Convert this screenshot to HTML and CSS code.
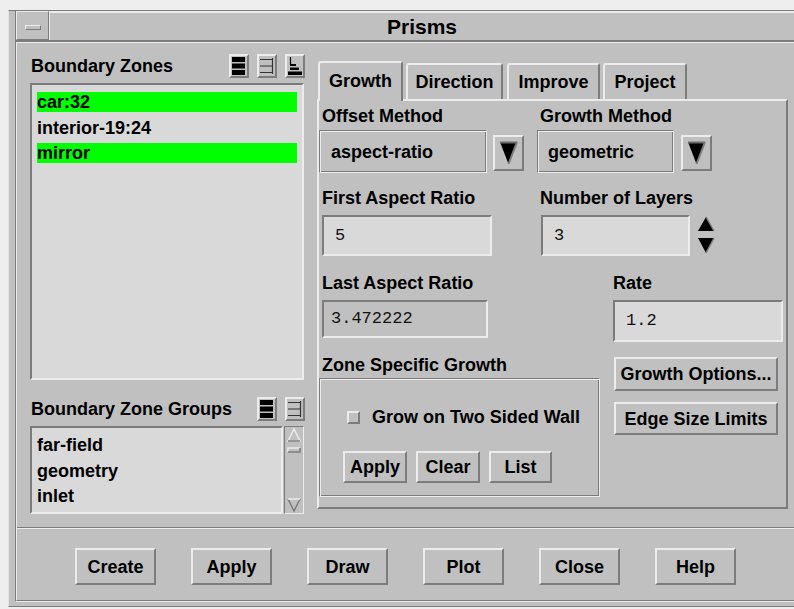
FILE: index.html
```html
<!DOCTYPE html>
<html>
<head>
<meta charset="utf-8">
<title>Prisms</title>
<link rel="stylesheet" href="styles.css">
</head>
<body>
<div class="wm">
  <div class="wm-inner">
    <div class="titlebar">
      <div class="wm-menu"><span class="wm-menu-bar"></span></div>
      <div class="wm-title">Prisms</div>
    </div>

    <div class="dialog">
      <div class="main">
        <!-- zone lists -->
        <div class="left">
          <div class="head">
            <span class="lbl-plain">Boundary Zones</span>
            <div class="icons">
              <span class="icon-btn">
                <svg width="16" height="20" viewBox="0 0 16 20"><rect x="1" y="1" width="13" height="5" fill="#000"/><rect x="1" y="7.5" width="13" height="5" fill="#000"/><rect x="1" y="14" width="13" height="5" fill="#000"/></svg>
              </span>
              <span class="icon-btn">
                <svg width="16" height="20" viewBox="0 0 16 20"><path d="M1 3.5H13M1 10H13M1 16.5H13M13.5 2V18" stroke="#333" stroke-width="1.2" fill="none"/></svg>
              </span>
              <span class="icon-btn">
                <svg width="16" height="20" viewBox="0 0 16 20"><path d="M3.5 1V9" stroke="#000" stroke-width="1.2"/><rect x="3" y="8" width="6" height="2" fill="#000"/><rect x="3" y="11.5" width="9" height="2.5" fill="#000"/><rect x="1" y="15.5" width="14" height="3.5" fill="#000"/></svg>
              </span>
            </div>
          </div>
          <div class="list zones">
            <div class="item sel">car:32</div>
            <div class="item">interior-19:24</div>
            <div class="item sel">mirror</div>
          </div>

          <div class="head groups-head">
            <span class="lbl-plain">Boundary Zone Groups</span>
            <div class="icons">
              <span class="icon-btn">
                <svg width="16" height="20" viewBox="0 0 16 20"><rect x="1" y="1" width="13" height="5" fill="#000"/><rect x="1" y="7.5" width="13" height="5" fill="#000"/><rect x="1" y="14" width="13" height="5" fill="#000"/></svg>
              </span>
              <span class="icon-btn">
                <svg width="16" height="20" viewBox="0 0 16 20"><path d="M1 3.5H13M1 10H13M1 16.5H13M13.5 2V18" stroke="#333" stroke-width="1.2" fill="none"/></svg>
              </span>
            </div>
          </div>
          <div class="scrolled">
            <div class="list groups">
              <div class="item">far-field</div>
              <div class="item">geometry</div>
              <div class="item">inlet</div>
            </div>
            <div class="vscroll">
              <svg width="18" height="86" viewBox="0 0 18 86">
                <path d="M3 14L9 2L15 14Z" fill="none" stroke="#ececec" stroke-width="1.5"/>
                <path d="M3 14H15" stroke="#7c7c7c" stroke-width="1.5"/>
                <path d="M3 25V21H15" fill="none" stroke="#ececec" stroke-width="1.5"/>
                <path d="M3 25H15V21" fill="none" stroke="#7c7c7c" stroke-width="1.5"/>
                <path d="M3 72L9 84L15 72" fill="none" stroke="#7c7c7c" stroke-width="1.5"/>
                <path d="M3 72H15" stroke="#ececec" stroke-width="1.5"/>
              </svg>
            </div>
          </div>
        </div>

        <!-- notebook -->
        <div class="right">
          <div class="tabs">
            <div class="tab active t-growth">Growth</div>
            <div class="tab t-direction">Direction</div>
            <div class="tab t-improve">Improve</div>
            <div class="tab t-project">Project</div>
          </div>
          <div class="panel">
            <div class="row row1">
              <div class="col-a">
                <div class="lbl">Offset Method</div>
                <div class="ctrl">
                  <div class="option opt-offset">aspect-ratio</div>
                  <div class="arrow-btn">
                    <svg width="27" height="32" viewBox="0 0 27 32"><path d="M5 5H22L13.5 27Z" fill="#000"/><path d="M5 5.5H22" stroke="#6a6a6a" stroke-width="2"/><path d="M22 5L13.5 27" stroke="#7c7c7c" stroke-width="2"/></svg>
                  </div>
                </div>
              </div>
              <div class="col-b">
                <div class="lbl">Growth Method</div>
                <div class="ctrl">
                  <div class="option opt-growth">geometric</div>
                  <div class="arrow-btn arrow-b">
                    <svg width="27" height="32" viewBox="0 0 27 32"><path d="M5 5H22L13.5 27Z" fill="#000"/><path d="M5 5.5H22" stroke="#6a6a6a" stroke-width="2"/><path d="M22 5L13.5 27" stroke="#7c7c7c" stroke-width="2"/></svg>
                  </div>
                </div>
              </div>
            </div>

            <div class="row row2">
              <div class="col-a">
                <div class="lbl">First Aspect Ratio</div>
                <div class="field f-first">5</div>
              </div>
              <div class="col-b">
                <div class="lbl">Number of Layers</div>
                <div class="ctrl ctrl-layers">
                  <div class="field f-layers">3</div>
                  <div class="spinner">
                    <svg width="21" height="38" viewBox="0 0 21 38"><path d="M2 15H18L10 1Z" fill="#000"/><path d="M10 1L18 15" stroke="#7c7c7c" stroke-width="1.5"/><path d="M2 22H18L10 37Z" fill="#000"/><path d="M18 22L10 37" stroke="#7c7c7c" stroke-width="1.5"/></svg>
                  </div>
                </div>
              </div>
            </div>

            <div class="row row3">
              <div class="col-c">
                <div class="lbl">Last Aspect Ratio</div>
                <div class="field ro f-last">3.472222</div>
                <div class="lbl lbl-zone">Zone Specific Growth</div>
                <div class="frame">
                  <div class="check-row">
                    <span class="checkbox"></span>
                    <span class="check-label">Grow on Two Sided Wall</span>
                  </div>
                  <div class="frame-btns">
                    <div class="btn b-apply">Apply</div>
                    <div class="btn b-clear">Clear</div>
                    <div class="btn b-list">List</div>
                  </div>
                </div>
              </div>
              <div class="col-d">
                <div class="lbl lbl-rate">Rate</div>
                <div class="field f-rate">1.2</div>
                <div class="btn b-wide b-options">Growth Options...</div>
                <div class="btn b-wide b-edge">Edge Size Limits</div>
              </div>
            </div>
          </div>
        </div>
      </div>

      <div class="separator"></div>

      <div class="actions">
        <div class="btn b-action">Create</div>
        <div class="btn b-action">Apply</div>
        <div class="btn b-action">Draw</div>
        <div class="btn b-action">Plot</div>
        <div class="btn b-action">Close</div>
        <div class="btn b-action">Help</div>
      </div>
    </div>
  </div>
</div>
</body>
</html>
```

FILE: styles.css
```css
* { box-sizing: border-box; }

html, body {
  margin: 0;
  height: 100%;
  overflow: hidden;
}

body {
  background: #eeeeee;
  font-family: "Liberation Sans", Arial, sans-serif;
  font-weight: bold;
  font-size: 18px;
  line-height: 20px;
  color: #000;
}

/* window manager frame */
.wm {
  margin: 10px 0 0 8px;
  width: 786px;
  height: 597px;
  background: #c0c0c0;
  border-top: 1px solid #7c7c7c;
  border-left: 1px solid #e4e4e4;
  border-bottom: 1px solid #7c7c7c;
  padding-left: 6px;
}

.wm-inner {
  height: 591px;
  border-left: 1px solid #7c7c7c;
  border-bottom: 1px solid #ececec;
  display: flex;
  flex-direction: column;
}

.titlebar {
  display: flex;
  height: 31px;
  border-bottom: 2px solid #7c7c7c;
}

.wm-menu {
  width: 33px;
  border: 1px solid;
  border-color: #ececec #7c7c7c #7c7c7c #ececec;
  display: flex;
  align-items: center;
  justify-content: center;
}

.wm-menu-bar {
  width: 16px;
  height: 5px;
  margin-top: 3px;
  border: 1px solid;
  border-color: #ececec #7c7c7c #7c7c7c #ececec;
}

.wm-title {
  flex: 1;
  border-top: 2px solid #ececec;
  border-left: 1px solid #ececec;
  font-size: 21px;
  display: flex;
  align-items: center;
  justify-content: center;
}

/* dialog body */
.dialog {
  height: 559px;
  border-top: 1px solid #ececec;
  border-left: 1px solid #ececec;
  border-bottom: 1px solid #7c7c7c;
}

.main {
  display: flex;
  padding: 10px 0 0 13px;
}

.left {
  width: 274px;
  display: flex;
  flex-direction: column;
}

.head {
  display: flex;
  align-items: center;
  justify-content: space-between;
  height: 26px;
}

.groups-head {
  margin-top: 17px;
  height: 24px;
}

.lbl-plain { padding-left: 1px; }

.icons {
  display: flex;
  gap: 8px;
  margin-right: -1px;
}

.icon-btn {
  display: flex;
  align-items: center;
  justify-content: center;
  width: 20px;
  height: 24px;
  border: 2px solid;
  border-color: #ececec #7c7c7c #7c7c7c #ececec;
}

.list {
  background: #d9d9d9;
  border: 2px solid;
  border-color: #7c7c7c #ececec #ececec #7c7c7c;
  padding: 7px 5px 0 5px;
  display: flex;
  flex-direction: column;
  gap: 5.5px;
}

.zones {
  margin-top: 4px;
  height: 297px;
}

.item {
  height: 20px;
  white-space: nowrap;
}

.item.sel { background: #00ff00; }

.scrolled {
  display: flex;
  gap: 1px;
  margin-top: 5px;
  height: 88px;
}

.groups {
  width: 253px;
  height: 88px;
}

.vscroll {
  width: 20px;
  height: 88px;
  border: 1px solid;
  border-color: #7c7c7c #ececec #ececec #7c7c7c;
}

.vscroll svg { display: block; }

/* notebook */
.right {
  margin-left: 13px;
  width: 471px;
  padding-top: 8px;
}

.tabs {
  display: flex;
  align-items: flex-end;
  height: 38px;
  padding-left: 1px;
}

.tab {
  height: 36px;
  border: 2px solid;
  border-bottom: none;
  border-color: #ececec #7c7c7c #7c7c7c #ececec;
  border-radius: 3px 3px 0 0;
  display: flex;
  align-items: center;
  justify-content: center;
  background: #c0c0c0;
}

.tab.active {
  position: relative;
  z-index: 2;
  height: 40px;
  margin-bottom: -2px;
  padding-bottom: 2px;
}

.t-growth { width: 85px; }
.t-direction { width: 97px; margin-left: 3px; }
.t-improve { width: 93px; margin-left: 4px; }
.t-project { width: 84px; margin-left: 3px; }

.panel {
  height: 410px;
  border: 2px solid;
  border-color: #ececec #7c7c7c #7c7c7c #ececec;
}

.row { display: flex; }
.row1 { padding-top: 5px; }
.row2 { margin-top: 15px; }
.row3 { margin-top: 17px; }

.col-a { width: 218px; }
.col-c { width: 293px; }

.lbl {
  height: 20px;
  padding-left: 3px;
  white-space: nowrap;
}

.ctrl {
  display: flex;
  align-items: flex-start;
  margin-top: 4px;
}

.option {
  height: 43px;
  display: flex;
  align-items: center;
  border: 1px solid;
  border-color: #7c7c7c #ececec #ececec #7c7c7c;
  box-shadow: inset 1px 1px 0 #ececec, inset -1px -1px 0 #7c7c7c;
}

.opt-offset { width: 168px; padding-left: 11px; }
.opt-growth { width: 137px; padding-left: 10px; }

.arrow-btn {
  width: 31px;
  height: 36px;
  margin-left: 6px;
  margin-top: 5px;
  border: 2px solid;
  border-color: #ececec #7c7c7c #7c7c7c #ececec;
}

.arrow-b { margin-left: 7px; }
.arrow-btn svg { display: block; }

.field {
  background: #d9d9d9;
  border: 2px solid;
  border-color: #7c7c7c #ececec #ececec #7c7c7c;
  display: flex;
  align-items: center;
  padding-left: 11px;
  font-family: "Liberation Mono", "Courier New", monospace;
  font-weight: normal;
  font-size: 17px;
  color: #111;
}

.field.ro {
  background: #c0c0c0;
  padding-left: 7px;
}

.f-first { width: 170px; height: 41px; margin-left: 3px; margin-top: 7px; }
.ctrl-layers { margin-top: 7px; }
.f-layers { width: 149px; height: 41px; margin-left: 4px; }
.spinner { margin-left: 6px; margin-top: 1px; }
.spinner svg { display: block; }

.f-last { width: 166px; height: 38px; margin-left: 3px; margin-top: 7px; }
.lbl-zone { margin-top: 17px; }

.frame {
  width: 281px;
  height: 119px;
  margin-top: 3px;
  border: 1px solid;
  border-color: #7c7c7c #ececec #ececec #7c7c7c;
  box-shadow: inset 1px 1px 0 #ececec, inset -1px -1px 0 #7c7c7c;
  padding: 1px;
}

.check-row {
  display: flex;
  align-items: center;
  height: 20px;
  margin-top: 27px;
  padding-left: 26px;
}

.checkbox {
  width: 13px;
  height: 13px;
  border: 2px solid;
  border-color: #ececec #7c7c7c #7c7c7c #ececec;
  background: #c0c0c0;
}

.check-label { margin-left: 12px; }

.frame-btns {
  display: flex;
  gap: 9px;
  margin-top: 24px;
  padding-left: 22px;
}

.btn {
  display: flex;
  align-items: center;
  justify-content: center;
  border: 2px solid;
  border-color: #ececec #7c7c7c #7c7c7c #ececec;
  white-space: nowrap;
}

.b-apply, .b-clear { width: 64px; height: 32px; }
.b-list { width: 63px; height: 32px; }

.lbl-rate { padding-left: 1px; }
.f-rate { width: 170px; height: 42px; margin-left: 1px; margin-top: 7px; }

.b-wide { width: 164px; margin-left: 2px; }
.b-options { height: 34px; margin-top: 15px; }
.b-edge { height: 33px; margin-top: 11px; }

/* bottom action area */
.separator {
  margin-top: 13px;
  height: 2px;
  border-top: 1px solid #7c7c7c;
  border-bottom: 1px solid #ececec;
}

.actions {
  display: flex;
  gap: 35px;
  margin-top: 19px;
  padding-left: 58px;
}

.b-action { width: 81px; height: 37px; }
```
